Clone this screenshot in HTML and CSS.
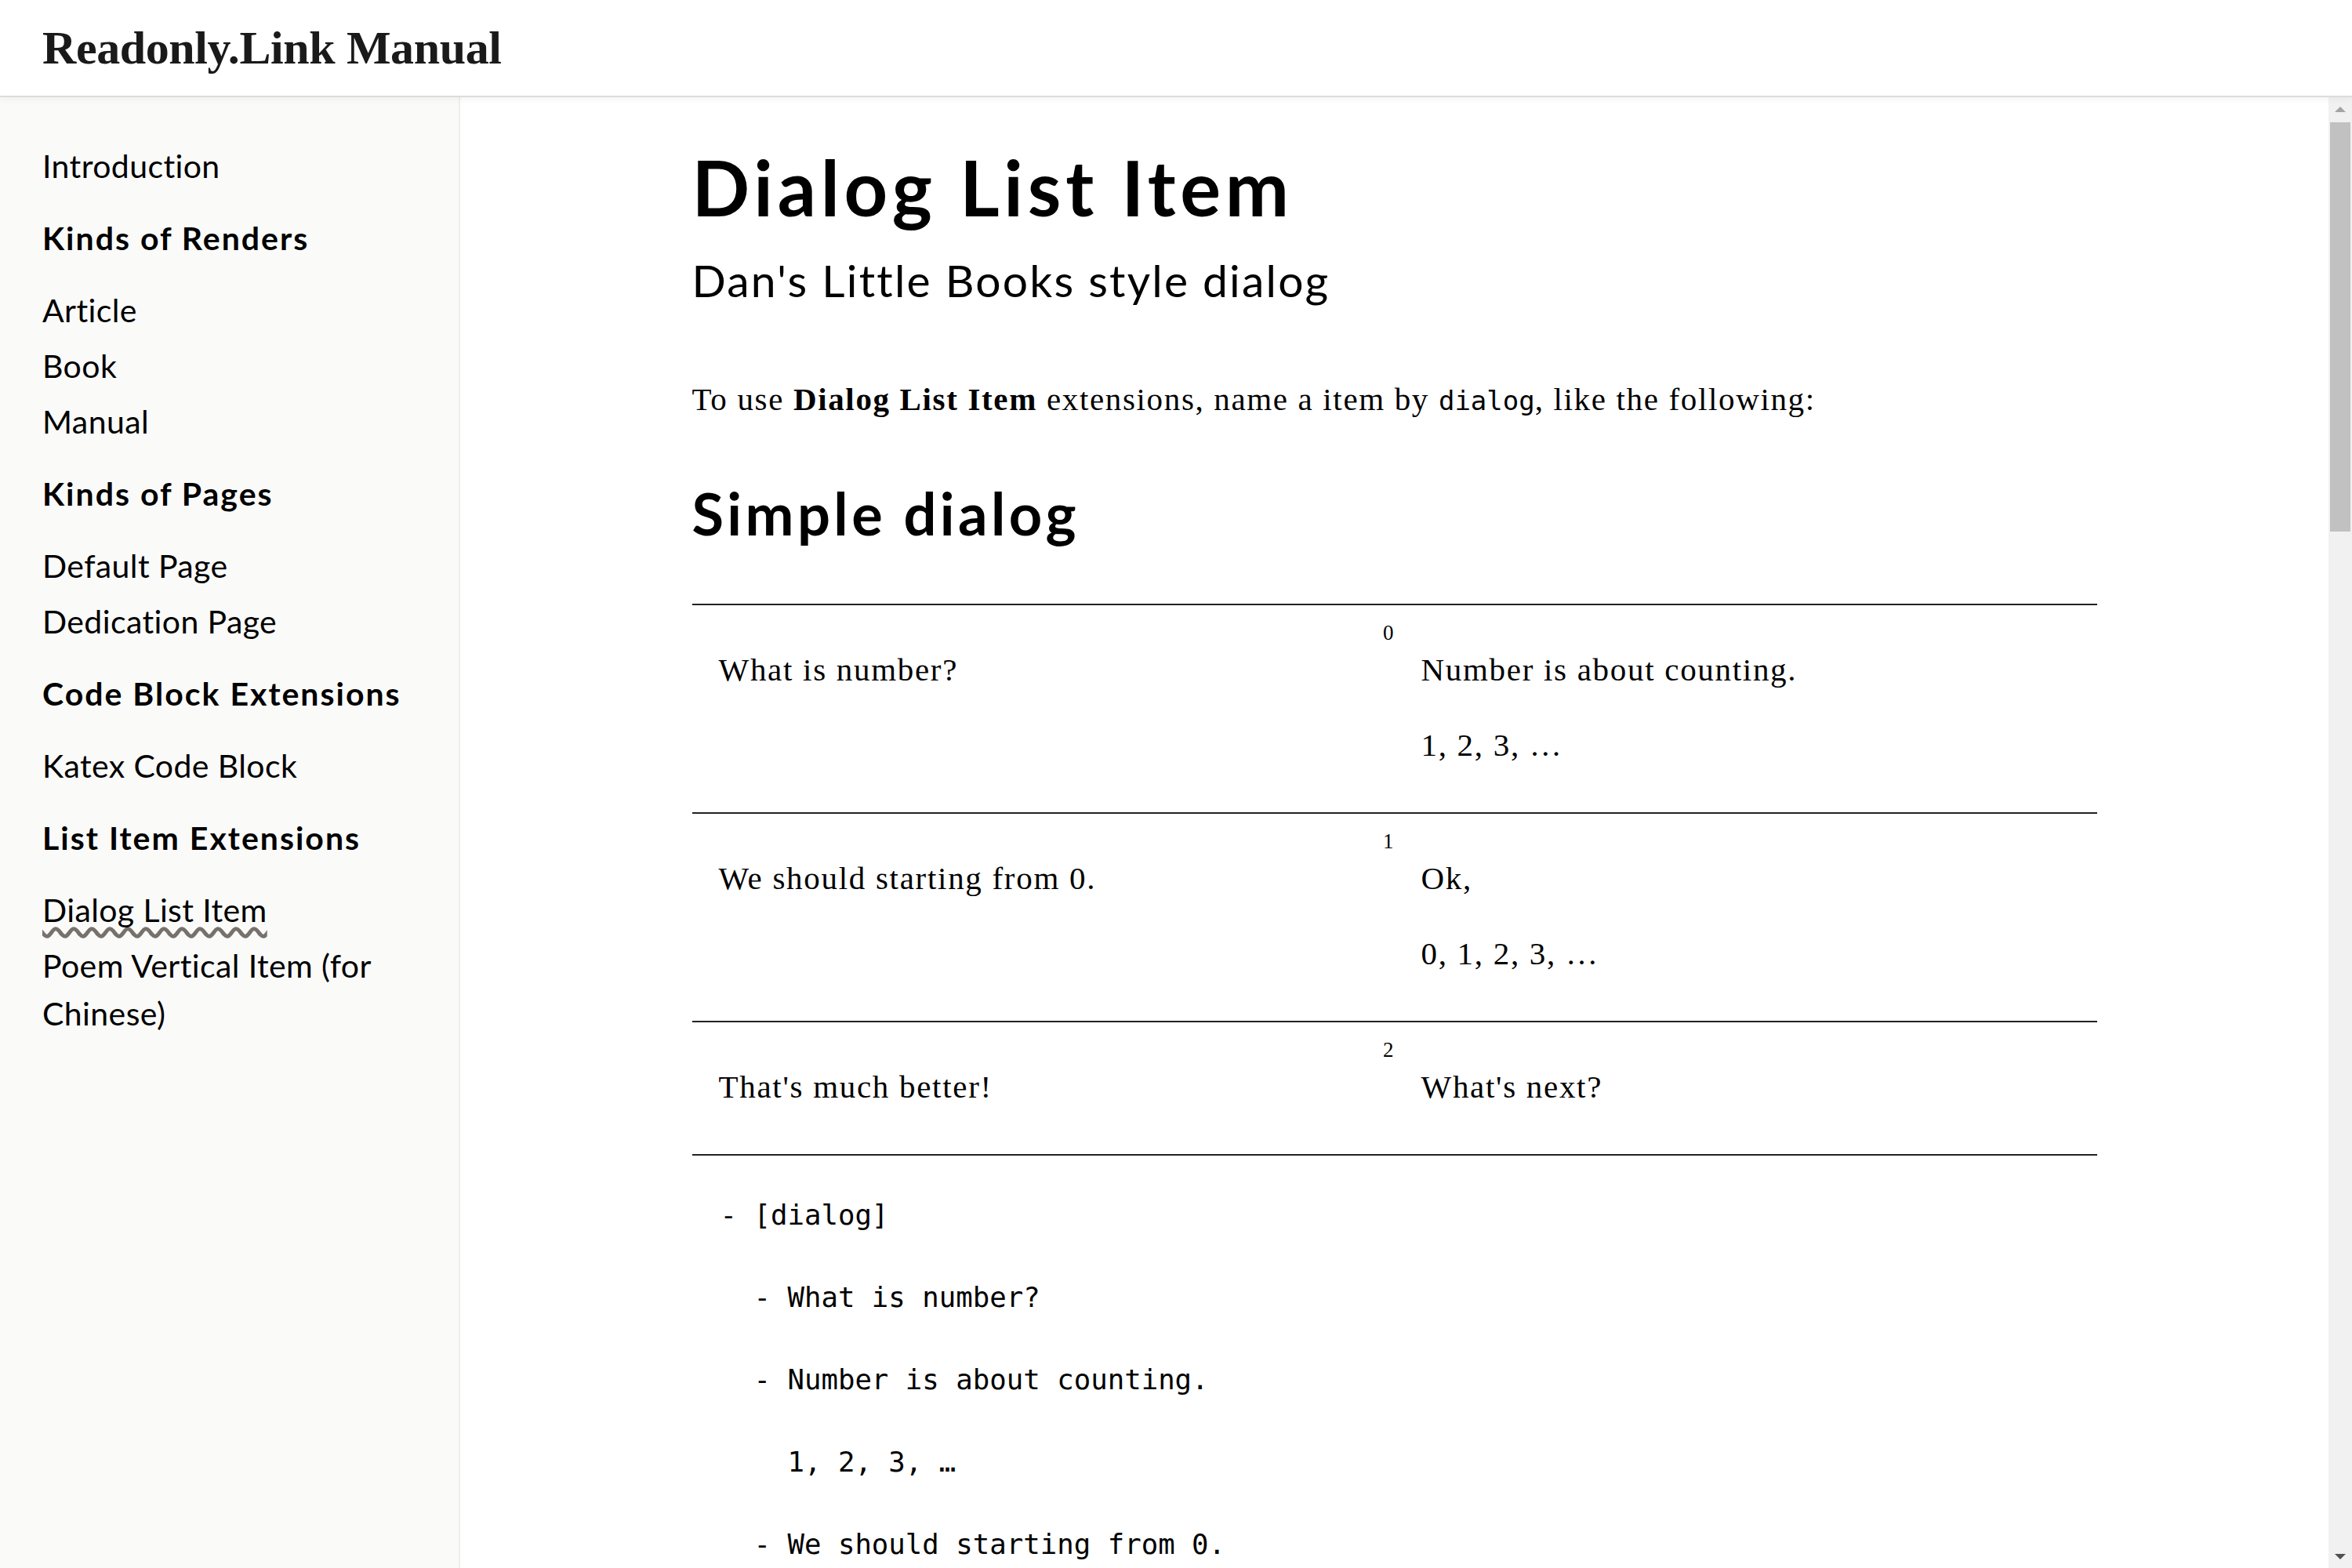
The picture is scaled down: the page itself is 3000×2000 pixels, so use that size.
FILE: index.html
```html
<!DOCTYPE html>
<html lang="en">
<head>
<meta charset="utf-8">
<title>Dialog List Item - Readonly.Link Manual</title>
<link rel="stylesheet" href="styles.css">
</head>
<body>
<header class="topbar">
  <div class="brand">Readonly.Link Manual</div>
</header>
<div class="layout">
  <nav class="sidebar">
    <a class="nav-link">Introduction</a>
    <div class="nav-group">Kinds of Renders</div>
    <a class="nav-link">Article</a>
    <a class="nav-link">Book</a>
    <a class="nav-link">Manual</a>
    <div class="nav-group">Kinds of Pages</div>
    <a class="nav-link">Default Page</a>
    <a class="nav-link">Dedication Page</a>
    <div class="nav-group">Code Block Extensions</div>
    <a class="nav-link">Katex Code Block</a>
    <div class="nav-group">List Item Extensions</div>
    <a class="nav-link active"><span class="wavy">Dialog List Item</span></a>
    <a class="nav-link">Poem Vertical Item (for Chinese)</a>
  </nav>
  <div class="main">
    <main class="main-scroll">
      <article class="page">
        <h1 class="title">Dialog List Item</h1>
        <div class="subtitle">Dan's Little Books style dialog</div>
        <p class="lead">To use <b>Dialog List Item</b> extensions, name a item by <code class="inline-code">dialog</code>, like the following:</p>
        <h2 class="section-title">Simple dialog</h2>
        <div class="dialog">
          <div class="dialog-row">
            <div class="cell"><p>What is number?</p></div>
            <div class="cell cell-right"><span class="idx">0</span><p>Number is about counting.</p><p>1, 2, 3, …</p></div>
          </div>
          <div class="dialog-row">
            <div class="cell"><p>We should starting from 0.</p></div>
            <div class="cell cell-right"><span class="idx">1</span><p>Ok,</p><p>0, 1, 2, 3, …</p></div>
          </div>
          <div class="dialog-row">
            <div class="cell"><p>That's much better!</p></div>
            <div class="cell cell-right"><span class="idx">2</span><p>What's next?</p></div>
          </div>
        </div>
<pre class="code">- [dialog]

  - What is number?

  - Number is about counting.

    1, 2, 3, …

  - We should starting from 0.

  - Ok,

    0, 1, 2, 3, …

  - That's much better!

  - What's next?</pre>
      </article>
    </main>
    <div class="scrollbar" aria-hidden="true">
      <div class="sb-btn"><svg width="14" height="7" viewBox="0 0 14 7"><polygon points="0,7 7,0 14,7" fill="#a3a3a3"/></svg></div>
      <div class="sb-track"><div class="sb-thumb"></div></div>
      <div class="sb-btn"><svg width="14" height="7" viewBox="0 0 14 7"><polygon points="0,0 14,0 7,7" fill="#505050"/></svg></div>
    </div>
  </div>
</div>
</body>
</html>
```

FILE: styles.css
```css
html, body {
  margin: 0;
  padding: 0;
  height: 100%;
}

body {
  overflow: hidden;
  background: #ffffff;
  color: #000000;
  font-family: "Liberation Serif", serif;
  display: flex;
  flex-direction: column;
}

.topbar {
  flex: none;
  height: 122px;
  border-bottom: 2px solid #dedbd8;
  box-shadow: 0 2px 10px rgba(0, 0, 0, 0.05);
  background: #ffffff;
  display: flex;
  align-items: center;
  padding-left: 54px;
  position: relative;
  z-index: 2;
}

.brand {
  font-family: "Liberation Serif", serif;
  font-weight: 700;
  font-size: 60px;
  letter-spacing: -0.4px;
  color: #1a1a1a;
  line-height: 1;
}

.layout {
  flex: 1;
  display: flex;
  min-height: 0;
}

.sidebar {
  flex: none;
  width: 477px;
  padding: 52px 54px 0 54px;
  background: #fafaf9;
  border-right: 2px solid #efeeec;
  font-family: "Lato", sans-serif;
  font-size: 41px;
  color: #000;
}

.nav-link {
  display: block;
  line-height: 61px;
  padding: 5px 0;
  letter-spacing: 0.4px;
}

.nav-group {
  font-weight: 700;
  line-height: 61px;
  padding: 5px 0;
  margin: 21px 0;
  letter-spacing: 2px;
}

.wavy {
  text-decoration: underline wavy #77716c;
  text-decoration-thickness: 4.5px;
  text-underline-offset: 7px;
  text-decoration-skip-ink: none;
}

.main {
  flex: 1;
  display: flex;
  min-width: 0;
}

.main-scroll {
  flex: 1;
  min-width: 0;
  overflow: hidden;
  padding-top: 57px;
}

.scrollbar {
  flex: none;
  width: 30px;
  background: #f1f1f1;
  display: flex;
  flex-direction: column;
}

.sb-btn {
  flex: none;
  height: 30px;
  display: flex;
  align-items: center;
  justify-content: center;
}

.sb-btn svg {
  display: block;
}

.sb-track {
  flex: 1;
  padding: 2px 2px 0;
}

.sb-thumb {
  height: 522px;
  background: #c1c1c1;
}

.page {
  width: 1792px;
  margin: 0 auto;
}

.title {
  font-family: "Lato", sans-serif;
  font-weight: 700;
  font-size: 97px;
  line-height: 116px;
  letter-spacing: 5.8px;
  margin: 0;
}

.subtitle {
  font-family: "Lato", sans-serif;
  font-size: 57px;
  line-height: 68px;
  letter-spacing: 2.2px;
  margin-top: 26px;
}

.lead {
  font-size: 41px;
  line-height: 60px;
  letter-spacing: 1.65px;
  margin: 88px 0 0;
}

.inline-code {
  font-family: "DejaVu Sans Mono", monospace;
  font-size: 34px;
  letter-spacing: 0;
}

.section-title {
  font-family: "Lato", sans-serif;
  font-weight: 700;
  font-size: 74px;
  line-height: 88px;
  letter-spacing: 4.4px;
  margin: 70px 0 0;
}

.dialog {
  margin-top: 71px;
  border-bottom: 2px solid #222;
}

.dialog-row {
  display: grid;
  grid-template-columns: 1fr 1fr;
  border-top: 2px solid #222;
}

.cell {
  padding: 52px 35px 56px 34px;
  font-size: 41px;
  line-height: 60px;
  letter-spacing: 1.7px;
}

.cell p {
  margin: 0;
}

.cell p + p {
  margin-top: 36px;
}

.cell-right {
  position: relative;
}

.idx {
  position: absolute;
  right: 100%;
  top: 22px;
  margin-right: 1px;
  font-size: 27px;
  line-height: 1;
  letter-spacing: 0;
  color: #000;
}

.code {
  margin: 50px 0 0;
  padding-left: 36px;
  font-family: "DejaVu Sans Mono", monospace;
  font-size: 35.7px;
  line-height: 52.5px;
  color: #000;
}
```
